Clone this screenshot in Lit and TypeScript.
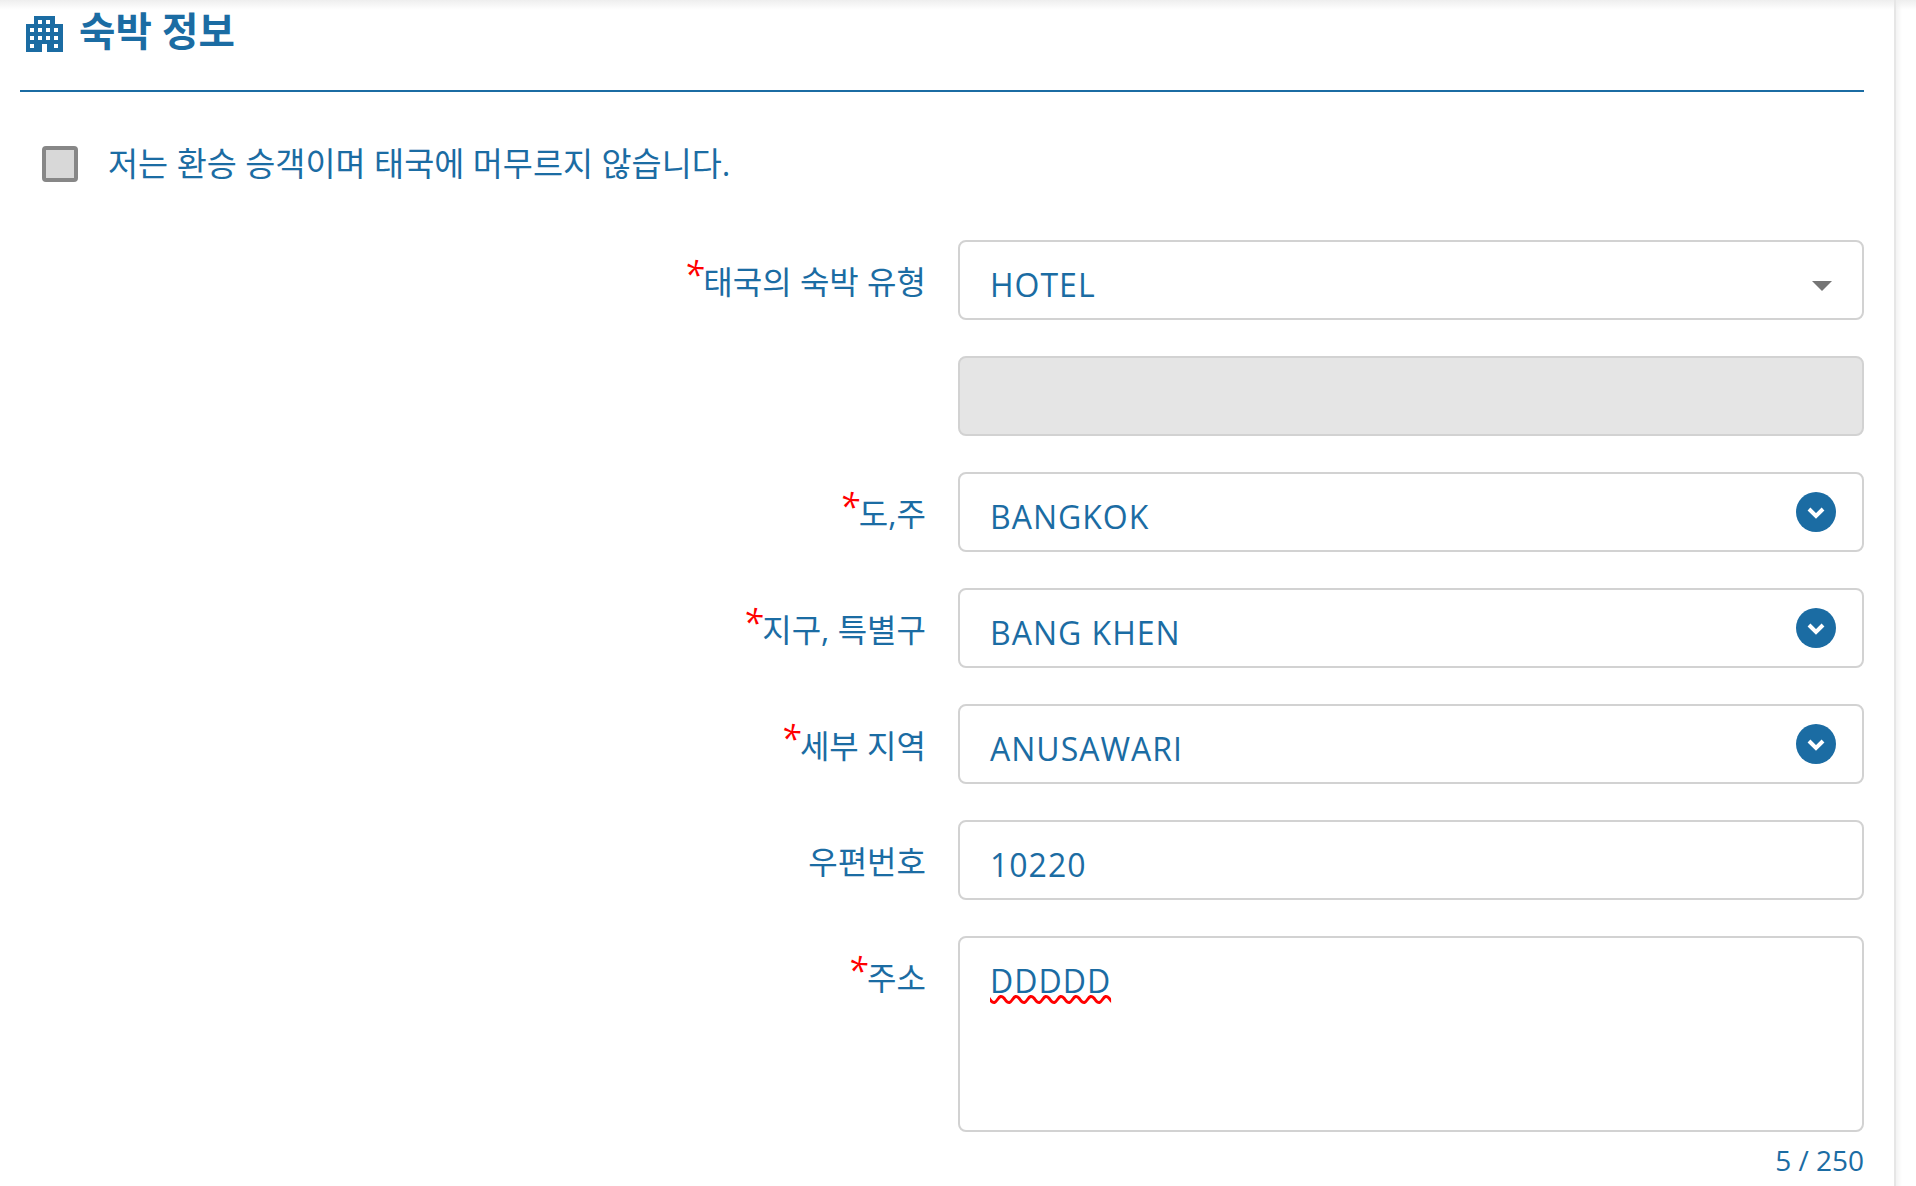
import { css, html, LitElement } from 'lit';
import { customElement } from 'lit/decorators.js';

type Field = {
  label: string;
  required?: boolean;
  value?: string;
  kind: 'select' | 'combo' | 'text' | 'disabled';
};

const FIELDS: Field[] = [
  { label: '태국의 숙박 유형', required: true, value: 'HOTEL', kind: 'select' },
  { label: '', kind: 'disabled' },
  { label: '도,주', required: true, value: 'BANGKOK', kind: 'combo' },
  { label: '지구, 특별구', required: true, value: 'BANG KHEN', kind: 'combo' },
  { label: '세부 지역', required: true, value: 'ANUSAWARI', kind: 'combo' },
  { label: '우편번호', value: '10220', kind: 'text' },
];

@customElement('app-root')
export class AppRoot extends LitElement {
  static styles = css`
    :host {
      display: block;
      height: 1186px;
      overflow: hidden;
      background:
        linear-gradient(#eeeeee, rgba(255, 255, 255, 0) 10px),
        linear-gradient(to right, #f3f3f3, #fff 6px) 1896px 0 no-repeat;
      font-family: 'Open Sans', 'Noto Sans CJK KR', sans-serif;
      font-size: 32px;
      color: #1b6ca3;
    }
    .panel {
      width: 1896px;
      height: 1186px;
      box-sizing: border-box;
      padding: 0 30px 0 20px;
      border-right: 2px solid #e6e6e6;
      background: linear-gradient(#eeeeee, #ffffff 10px);
    }
    .head {
      height: 92px;
      box-sizing: border-box;
      padding: 11px 0 0 6px;
      display: flex;
      align-items: flex-start;
      gap: 16px;
      border-bottom: 2px solid #1b6ca3;
    }
    .head svg {
      margin-top: 5px;
      flex: none;
    }
    h2 {
      margin: 0;
      font-size: 39.6px;
      line-height: 40px;
      font-weight: 700;
    }
    .transit {
      display: flex;
      align-items: center;
      gap: 30px;
      margin: 53px 0 0 22px;
      height: 38px;
      line-height: 38px;
    }
    .transit .text {
      font-size: 32.7px;
    }
    .check {
      width: 36px;
      height: 36px;
      box-sizing: border-box;
      border: 4px solid #878787;
      border-radius: 4px;
      background: #d8d8d8;
    }
    .form {
      display: grid;
      grid-template-columns: 1fr 906px;
      column-gap: 32px;
      row-gap: 36px;
      margin-top: 57px;
    }
    .label {
      text-align: right;
      padding-top: 21px;
      line-height: 42px;
    }
    .star {
      color: #ff0000;
      font-style: italic;
      font-size: 36px;
      line-height: 0;
      position: relative;
      top: -6px;
    }
    .box {
      height: 80px;
      box-sizing: border-box;
      border: 2px solid #d2d2d2;
      border-radius: 8px;
      padding: 22px 30px 0;
      line-height: 42px;
      letter-spacing: 1px;
      display: flex;
      justify-content: space-between;
      background: #fff;
    }
    .box.disabled {
      background: #e5e5e5;
    }
    .box.area {
      height: 196px;
    }
    .caret {
      width: 0;
      height: 0;
      margin: 17px 0 0 0;
      border-style: solid;
      border-width: 10px 10px 0;
      border-color: #757575 transparent transparent;
    }
    .circle {
      width: 40px;
      height: 40px;
      margin: -4px -4px 0 0;
      border-radius: 50%;
      background: #1b6ca3;
      display: flex;
      align-items: center;
      justify-content: center;
    }
    .typo {
      text-decoration: underline wavy #ff0000 2.5px;
      text-underline-offset: 2px;
    }
    .count {
      grid-column: 2;
      margin-top: -36px;
      padding-top: 9px;
      text-align: right;
      font-size: 28px;
      line-height: 38px;
    }
  `;

  private renderControl(field: Field) {
    if (field.kind === 'disabled') {
      return html`<div class="box disabled"></div>`;
    }
    return html`<div class="box">
      <span>${field.value}</span>
      ${field.kind === 'select' ? html`<span class="caret"></span>` : ''}
      ${field.kind === 'combo'
        ? html`<span class="circle">
            <svg width="18" height="13" viewBox="0 0 18 13">
              <path d="M2 3l7 7 7-7" fill="none" stroke="#fff" stroke-width="4" />
            </svg>
          </span>`
        : ''}
    </div>`;
  }

  private renderLabel(label: string, required?: boolean) {
    return html`<div class="label">
      ${required ? html`<span class="star">*</span>` : ''}${label}
    </div>`;
  }

  render() {
    return html`
      <div class="panel">
        <div class="head">
          <svg width="37" height="36" viewBox="0 0 37 36">
            <path
              fill="#1b6ca3"
              fill-rule="evenodd"
              d="M8 0h21v8h8v28H21v-8h-5v8H0V8h8zM12 4v4h4V4zM20 4v4h4V4zM4 12v4h4v-4zM12 12v4h4v-4zM20 12v4h4v-4zM28 12v4h4v-4zM4 20v4h4v-4zM12 20v4h4v-4zM20 20v4h4v-4zM28 20v4h4v-4zM4 28v4h4v-4zM28 28v4h4v-4z"
            />
          </svg>
          <h2>숙박 정보</h2>
        </div>
        <div class="transit">
          <span class="check"></span>
          <span class="text">저는 환승 승객이며 태국에 머무르지 않습니다.</span>
        </div>
        <div class="form">
          ${FIELDS.map(
            (f) => html`${this.renderLabel(f.label, f.required)}${this.renderControl(f)}`
          )}
          ${this.renderLabel('주소', true)}
          <div class="box area"><span class="typo">DDDDD</span></div>
          <div class="count">5 / 250</div>
        </div>
      </div>
    `;
  }
}
